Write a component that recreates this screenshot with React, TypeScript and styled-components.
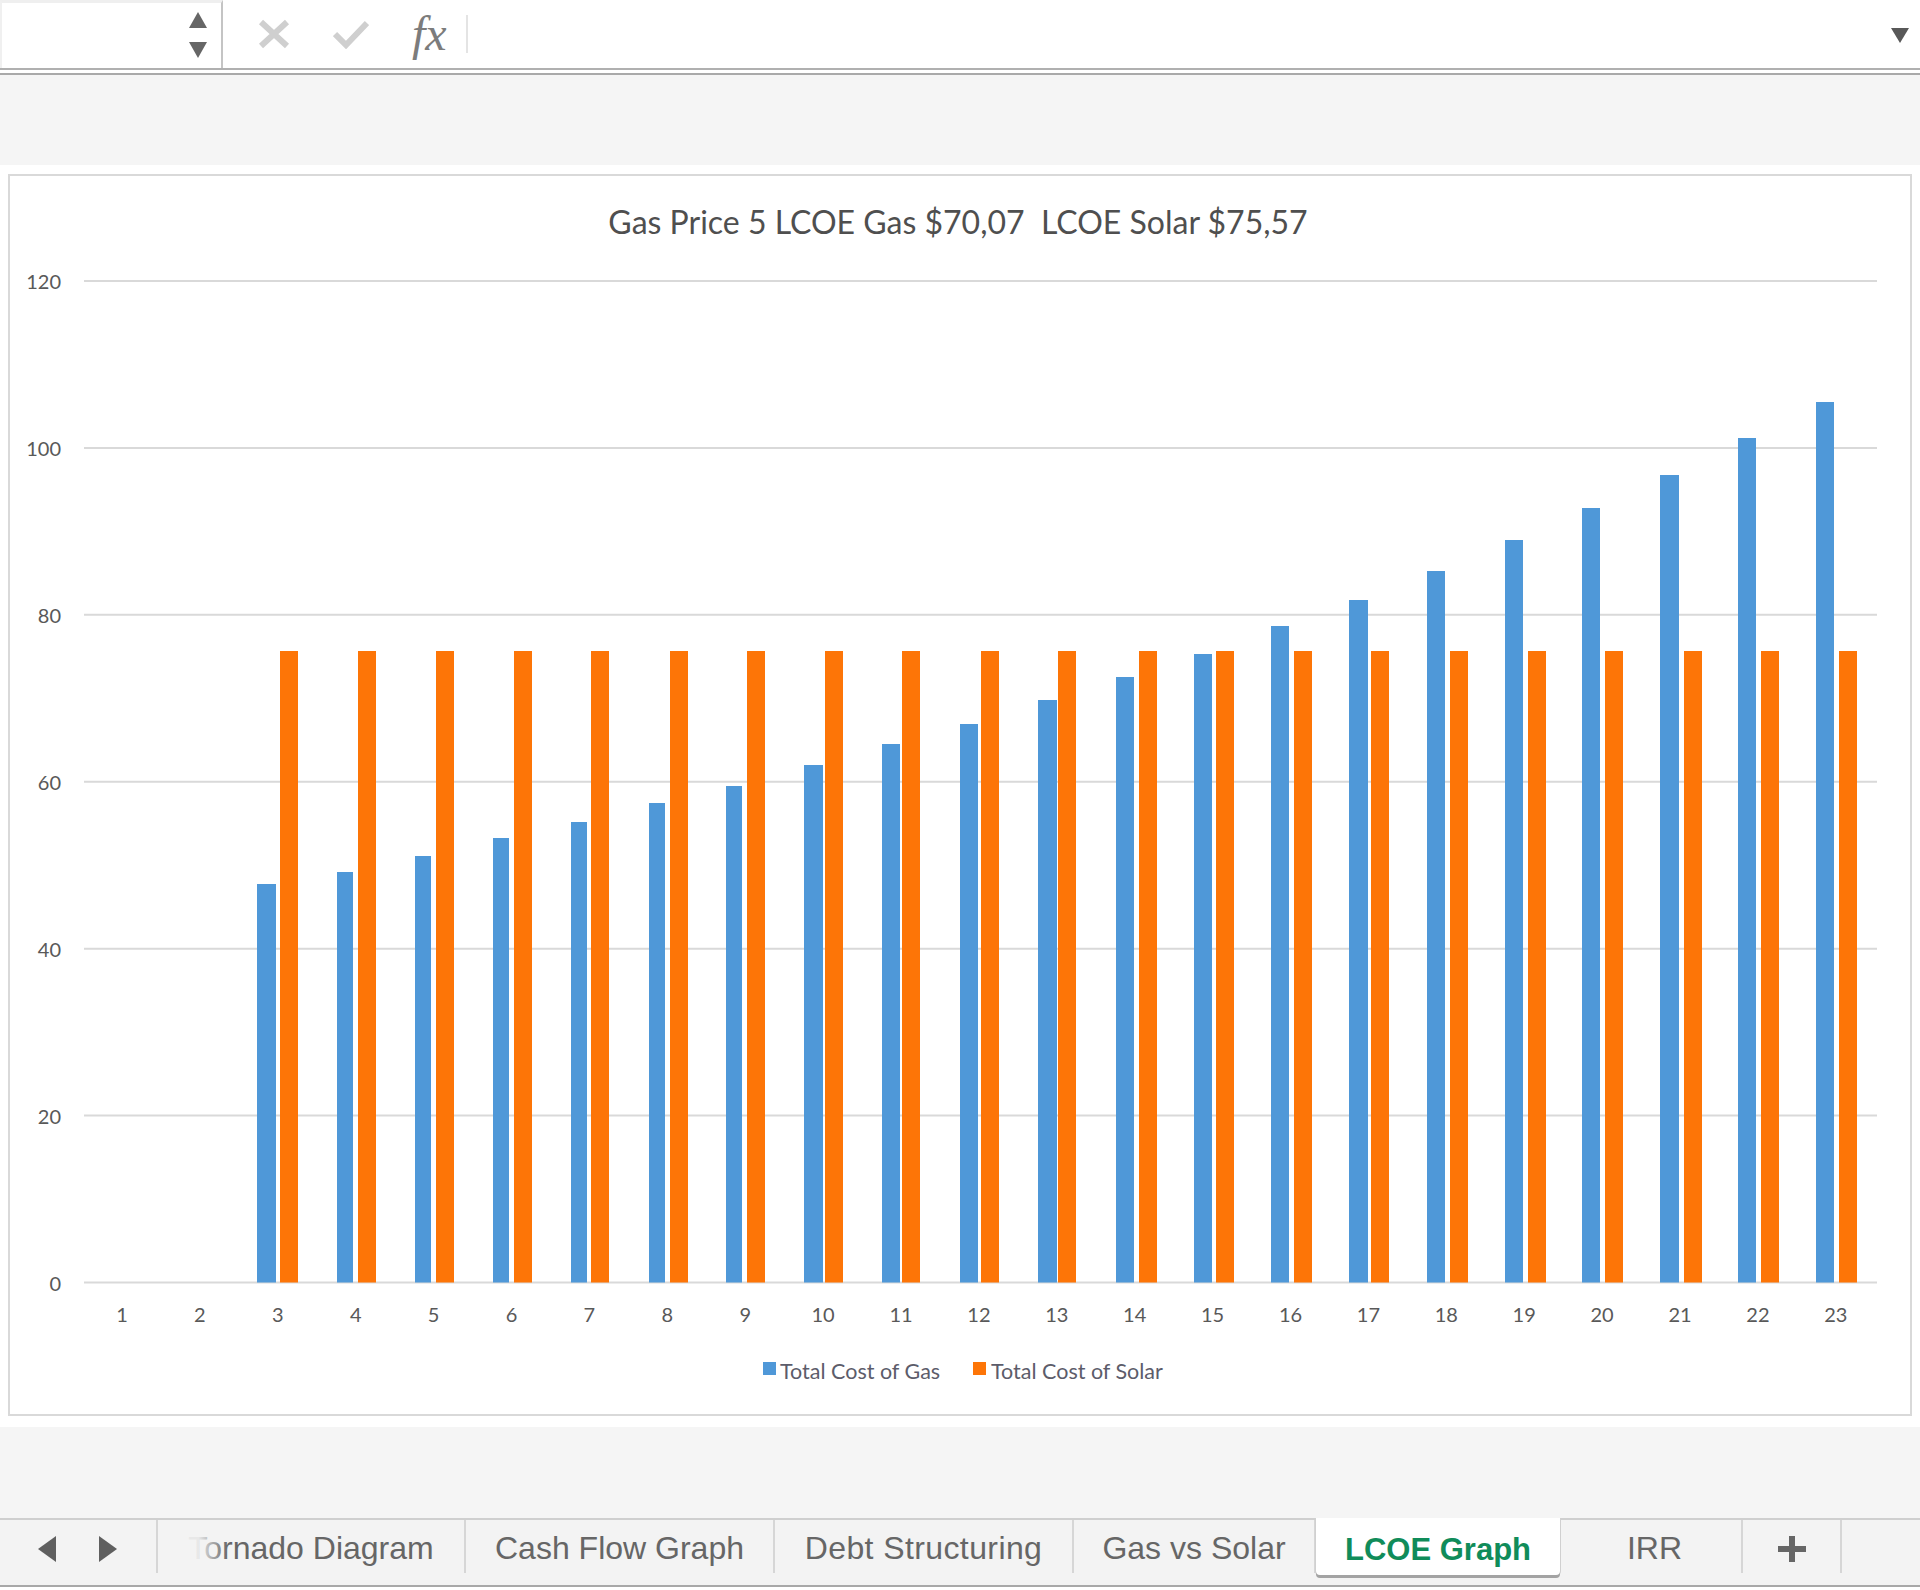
import React from "react";
import styled, { createGlobalStyle } from "styled-components";

const Global = createGlobalStyle`
  html, body { margin: 0; padding: 0; background: #fff; }
  * { box-sizing: border-box; }
  #root { width: 1920px; height: 1590px; overflow: hidden; }
`;

const Page = styled.div`
  width: 1920px;
  height: 1590px;
  display: flex;
  flex-direction: column;
  background: #fff;
  font-family: "Liberation Sans", Arial, sans-serif;
`;

/* ---------- formula bar ---------- */
const FormulaBar = styled.div`
  height: 68px;
  display: flex;
  align-items: stretch;
  background: #fff;
  flex: none;
`;
const NameBox = styled.div`
  width: 223px;
  flex: none;
  display: flex;
  flex-direction: column;
  align-items: flex-end;
  justify-content: space-between;
  padding: 9px 14px 10px 0;
  border-top: 3px solid #efefef;
  border-left: 2px solid #f0f0f0;
  border-right: 2px solid #c4c4c4;
`;
const Actions = styled.div`
  display: flex;
  align-items: center;
  padding-left: 35px;
  gap: 43px;
`;
const FxGroup = styled.div`
  display: flex;
  align-items: center;
  gap: 19px;
`;
const Fx = styled.span`
  font-family: "Liberation Serif", "Times New Roman", serif;
  font-style: italic;
  font-size: 48px;
  line-height: 44px;
  color: #7c7c7c;
  letter-spacing: 0;
`;
const FxDivider = styled.div`
  width: 2px;
  height: 38px;
  background: #e4e4e4;
`;
const Formula = styled.div`
  flex: 1;
  display: flex;
  justify-content: flex-end;
  align-items: flex-start;
  padding: 28px 11px 0 0;
`;
const BarRule = styled.div`
  height: 7px;
  flex: none;
  background: #fff;
  border-top: 2px solid #b0b0b0;
  border-bottom: 2px solid #a9a9a9;
`;

/* ---------- sheet ---------- */
const Band = styled.div<{ $h: number }>`
  height: ${(p) => p.$h}px;
  flex: none;
  background: #f5f5f5;
`;
const Sheet = styled.div`
  height: 1262px;
  flex: none;
  padding: 9px 8px 11px 8px;
  background: #fff;
`;
const ChartCard = styled.div`
  height: 100%;
  border: 2px solid #d9d9d9;
  background: #fff;
`;
const ChartSvg = styled.svg`
  display: block;
  width: 100%;
  height: 100%;
  font-family: Lato, "Open Sans", sans-serif;
`;
const GridLine = styled.line`
  stroke: #d9d9d9;
  stroke-width: 2;
`;
const Bar = styled.rect<{ $kind: "gas" | "solar" }>`
  fill: ${(p) => (p.$kind === "gas" ? "#4f98d8" : "#fd7507")};
`;
const ChartTitle = styled.text`
  font-size: 32px;
  fill: #4f4f4f;
  text-anchor: middle;
  dominant-baseline: central;
`;
const AxisLabel = styled.text<{ $anchor: string }>`
  font-size: 20px;
  fill: #595959;
  text-anchor: ${(p) => p.$anchor};
  dominant-baseline: central;
`;
const LegendText = styled.text`
  font-size: 21.5px;
  fill: #5c5c6a;
  dominant-baseline: central;
`;

/* ---------- tabs ---------- */
const TabBar = styled.div`
  height: 69px;
  flex: none;
  display: grid;
  grid-template-columns: 158px 308px 309px 299px 242px 244px 183px 99px 1fr;
  align-items: start;
  background: #f3f3f3;
  border-top: 2px solid #cfcfcf;
  border-bottom: 2px solid #a8a8a8;
`;
const Scroller = styled.div`
  height: 53px;
  display: flex;
  align-items: center;
  padding: 5px 0 0 38px;
  gap: 43px;
  border-right: 2px solid #d6d6d6;
`;
const Tab = styled.div<{ $active?: boolean; $shift?: number; $track?: number }>`
  position: relative;
  height: ${(p) => (p.$active ? "57px" : "53px")};
  margin-top: ${(p) => (p.$active ? "-2px" : "0")};
  display: flex;
  align-items: center;
  justify-content: center;
  font-size: ${(p) => (p.$active ? "31px" : "32px")};
  font-weight: ${(p) => (p.$active ? 700 : 400)};
  letter-spacing: ${(p) => p.$track ?? 0}px;
  color: ${(p) => (p.$active ? "#108c5a" : "#666")};
  background: ${(p) => (p.$active ? "#fff" : "transparent")};
  border-right: ${(p) => (p.$active ? "0" : "2px solid #d6d6d6")};
  border-radius: ${(p) => (p.$active ? "0 0 4px 4px" : "0")};
  box-shadow: ${(p) =>
    p.$active ? "0 3px 0 #a3a3a3, -1px 0 0 #d0d0d0, 1px 0 0 #d0d0d0" : "none"};
  padding-top: ${(p) => (p.$active ? "6px" : "4px")};
  padding-left: ${(p) => p.$shift ?? 0}px;
`;
const TabFade = styled.div`
  position: absolute;
  left: 28px;
  top: 8px;
  width: 42px;
  height: 38px;
  background: linear-gradient(to right, rgba(243, 243, 243, 0.92) 30%, rgba(243, 243, 243, 0));
`;
const PlainCell = styled.div`
  height: 53px;
`;

/* ---------- data (x and y measured on the reference) ---------- */
const px = (v: number) => Math.round((v * 1920) / 1568);
const BASE = 1282.5;
const SOLAR_TOP = 651;
const series: [number, number, number, number, number][] = [
  [3, 210, 225, 229, 722],
  [4, 275, 288, 292, 712],
  [5, 339, 352, 356, 699],
  [6, 403, 416, 420, 684],
  [7, 466, 479, 483, 671],
  [8, 530, 543, 547, 656],
  [9, 593, 606, 610, 642],
  [10, 657, 672, 674, 625],
  [11, 720, 735, 737, 608],
  [12, 784, 799, 801, 591],
  [13, 848, 863, 864, 572],
  [14, 911, 926, 930, 553],
  [15, 975, 990, 993, 534],
  [16, 1038, 1053, 1057, 511],
  [17, 1102, 1117, 1120, 490],
  [18, 1165, 1180, 1184, 466],
  [19, 1229, 1244, 1248, 441],
  [20, 1292, 1307, 1311, 415],
  [21, 1356, 1371, 1375, 388],
  [22, 1419, 1434, 1438, 358],
  [23, 1483, 1498, 1502, 328],
];
const yTicks = [120, 100, 80, 60, 40, 20, 0];
const categories = Array.from({ length: 23 }, (_, i) => i + 1);
const tickY = (t: number) => BASE - (t / 120) * 1001.5;
const catX = (c: number) => 122 + (c - 1) * 77.9;

function Triangle({ dir, w, h, fill }: { dir: "up" | "down" | "left" | "right"; w: number; h: number; fill: string }) {
  const pts = {
    up: `${w / 2},0 ${w},${h} 0,${h}`,
    down: `0,0 ${w},0 ${w / 2},${h}`,
    left: `${w},0 ${w},${h} 0,${h / 2}`,
    right: `0,0 ${w},${h / 2} 0,${h}`,
  }[dir];
  return (
    <svg width={w} height={h} viewBox={`0 0 ${w} ${h}`}>
      <polygon points={pts} fill={fill} />
    </svg>
  );
}

export default function App() {
  return (
    <Page>
      <Global />
      <FormulaBar>
        <NameBox>
          <Triangle dir="up" w={18} h={16} fill="#666" />
          <Triangle dir="down" w={18} h={16} fill="#666" />
        </NameBox>
        <Actions>
          <svg width="32" height="30" viewBox="0 0 32 30">
            <path d="M3 3 L29 27 M29 3 L3 27" stroke="#cfcfcf" strokeWidth="6" fill="none" />
          </svg>
          <svg width="36" height="30" viewBox="0 0 36 30">
            <path d="M2 15 L13 26 L34 4" stroke="#cfcfcf" strokeWidth="6" fill="none" />
          </svg>
          <FxGroup>
            <Fx>fx</Fx>
            <FxDivider />
          </FxGroup>
        </Actions>
        <Formula>
          <Triangle dir="down" w={18} h={15} fill="#585858" />
        </Formula>
      </FormulaBar>
      <BarRule />
      <Band $h={90} />
      <Sheet>
        <ChartCard>
          <ChartSvg viewBox="10 176 1900 1238">
            <ChartTitle x={958} y={221}>
              Gas Price 5 LCOE Gas $70,07{"\u00A0\u00A0"}LCOE Solar $75,57
            </ChartTitle>
            {yTicks.map((t) => (
              <g key={t}>
                <GridLine x1={84} x2={1877} y1={tickY(t)} y2={tickY(t)} />
                <AxisLabel $anchor="end" x={61} y={tickY(t)}>
                  {t}
                </AxisLabel>
              </g>
            ))}
            {series.map(([c, bx, bx2, ox, top]) => (
              <g key={c}>
                <Bar $kind="gas" x={px(bx)} width={px(bx2) - px(bx)} y={px(top)} height={BASE - px(top)} />
                <Bar $kind="solar" x={px(ox)} width={18} y={SOLAR_TOP} height={BASE - SOLAR_TOP} />
              </g>
            ))}
            {categories.map((c) => (
              <AxisLabel key={c} $anchor="middle" x={catX(c)} y={1314}>
                {c}
              </AxisLabel>
            ))}
            <Bar $kind="gas" x={763} y={1362} width={13} height={13} />
            <LegendText x={780} y={1371}>Total Cost of Gas</LegendText>
            <Bar $kind="solar" x={973} y={1362} width={13} height={13} />
            <LegendText x={991} y={1371}>Total Cost of Solar</LegendText>
          </ChartSvg>
        </ChartCard>
      </Sheet>
      <Band $h={91} />
      <TabBar>
        <Scroller>
          <Triangle dir="left" w={18} h={26} fill="#5f5f5f" />
          <Triangle dir="right" w={18} h={26} fill="#5f5f5f" />
        </Scroller>
        <Tab>
          Tornado Diagram
          <TabFade />
        </Tab>
        <Tab>Cash Flow Graph</Tab>
        <Tab $track={0.4}>Debt Structuring</Tab>
        <Tab>Gas vs Solar</Tab>
        <Tab $active>LCOE Graph</Tab>
        <Tab $shift={8}>IRR</Tab>
        <Tab>
          <svg width="28" height="26" viewBox="0 0 28 26">
            <path d="M0 13 H28 M14 0 V26" stroke="#666" strokeWidth="6" fill="none" />
          </svg>
        </Tab>
        <PlainCell />
      </TabBar>
    </Page>
  );
}
